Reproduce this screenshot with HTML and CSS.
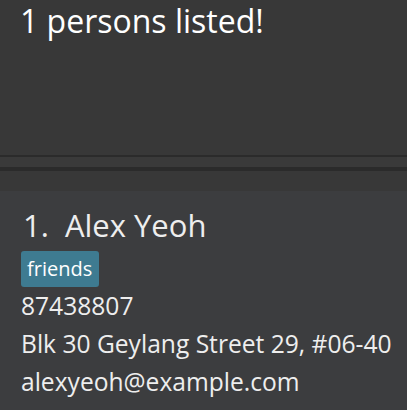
FILE: index.html
```html
<!DOCTYPE html>
<html>
<head>
<meta charset="utf-8">
<link rel="stylesheet" href="styles.css">
</head>
<body>
<div class="result">1 persons listed!</div>
<div class="splitter"></div>
<div class="gap"></div>
<div class="card">
  <div class="name"><span class="idx">1.</span>Alex Yeoh</div>
  <div class="tags"><span class="tag">friends</span></div>
  <div class="field">87438807</div>
  <div class="field">Blk 30 Geylang Street 29, #06-40</div>
  <div class="field">alexyeoh@example.com</div>
</div>
</body>
</html>
```
FILE: styles.css
```css
html, body {
  margin: 0;
  padding: 0;
  background: #383838;
  font-family: "Open Sans", "Noto Sans", sans-serif;
  overflow: hidden;
}
.result {
  height: 155px;
  box-sizing: border-box;
  padding: 0 20px;
  font-size: 32px;
  line-height: 42px;
  color: #ffffff;
}
.splitter {
  height: 10px;
  background: #3a3a3a;
  border-top: 2px solid #2b2b2b;
  border-bottom: 4px solid #2b2b2b;
}
.gap {
  height: 20px;
  background: #383838;
}
.card {
  background: #3c3d3f;
  height: 219px;
  padding: 10px 0 0 21px;
  color: #eeeeee;
  overflow: hidden;
}
.name {
  font-size: 31px;
  line-height: 48px;
  color: #eeeeee;
}
.idx {
  margin-left: 2px;
  margin-right: 16px;
}
.tags {
  display: flex;
  padding: 2px 0 0;
}
.tag {
  background: #3e7b91;
  color: #ffffff;
  font-size: 20px;
  line-height: 36px;
  padding: 0 7px 0 6px;
  border-radius: 3px;
}
.field {
  font-size: 24.6px;
  line-height: 38px;
  white-space: nowrap;
}
.field:first-of-type {
  margin-top: -1px;
}
```
